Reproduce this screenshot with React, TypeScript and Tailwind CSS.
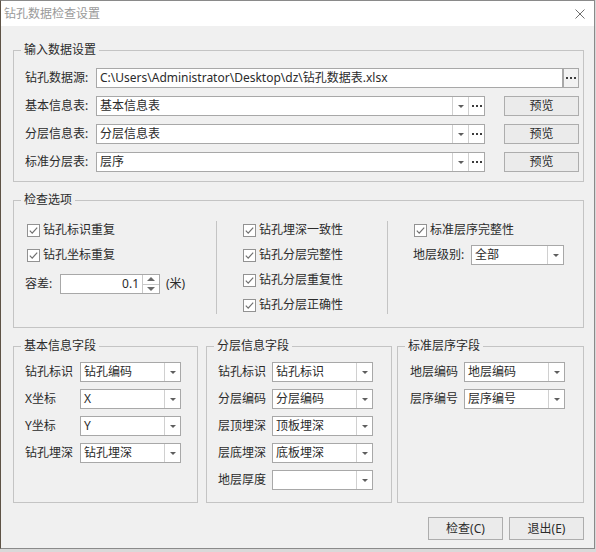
import React from "react";

const Arrow = () => (
  <span className="w-0 h-0 border-l-[3px] border-r-[3px] border-t-[3px] border-l-transparent border-r-transparent border-t-[#5e5e5e]" />
);

const Dots = () => (
  <span className="flex items-center gap-[2px]">
    <span className="w-[2px] h-[2px] bg-[#3c3c3c]" />
    <span className="w-[2px] h-[2px] bg-[#3c3c3c]" />
    <span className="w-[2px] h-[2px] bg-[#3c3c3c]" />
  </span>
);

const Group = ({
  title,
  className = "",
  children,
}: {
  title: string;
  className?: string;
  children: React.ReactNode;
}) => (
  <fieldset className={`border border-[#c4c4c4] min-w-0 ${className}`}>
    <legend className="ml-[7px] px-[3px] leading-[16px]">{title}</legend>
    {children}
  </fieldset>
);

const CheckBox = ({ label }: { label: string }) => (
  <div className="flex h-[18px] items-center gap-[3px]">
    <svg width="13" height="13" viewBox="0 0 13 13">
      <rect x="0.5" y="0.5" width="12" height="12" fill="#fff" stroke="#929292" />
      <path d="M2.8 6.6 L5.2 9.1 L10.2 3.6" fill="none" stroke="#707070" strokeWidth="1.2" />
    </svg>
    <span className="leading-[16px]">{label}</span>
  </div>
);

const Combo = ({ text, w }: { text: string; w: string }) => (
  <div className={`flex h-[20px] ${w} border border-[#a8a8a8] bg-white`}>
    <div className="flex-1 min-w-0 pl-[3px] leading-[18px] whitespace-nowrap overflow-hidden">{text}</div>
    <div className="w-[16px] border-l border-[#d0d0d0] flex items-center justify-center">
      <Arrow />
    </div>
  </div>
);

const SourceRow = ({ label, text }: { label: string; text: string }) => (
  <div className="flex h-[20px] items-center">
    <span className="w-[71px]">{label}</span>
    <div className="flex h-[20px] w-[389px] border border-[#a8a8a8] bg-white">
      <div className="flex-1 pl-[3px] leading-[18px]">{text}</div>
      <div className="w-[16px] border-l border-[#d0d0d0] flex items-center justify-center">
        <Arrow />
      </div>
      <div className="w-[16px] border-l border-[#d0d0d0] flex items-center justify-center">
        <Dots />
      </div>
    </div>
    <button className="ml-auto w-[75px] h-[20px] border border-[#adadad] bg-[#ebebeb] leading-[18px]">
      预览
    </button>
  </div>
);

const FieldRow = ({ label, text, lw }: { label: string; text: string; lw: string }) => (
  <div className="flex h-[20px] items-center">
    <span className={lw}>{label}</span>
    <Combo text={text} w="w-[101px]" />
  </div>
);

export default function App() {
  return (
    <div className="w-[596px] h-[552px] bg-[#d9d9d9] overflow-hidden font-['Noto_Sans','Noto_Sans_CJK_SC',sans-serif] text-[12px] text-[#2b2b2b]">
      <div className="w-[595px] h-[549px] border border-[#8a8a8a] border-l-[#5e5346] bg-[#f0f0f0] flex flex-col">
        {/* title bar */}
        <div className="h-[25px] bg-white flex items-center pl-[3px] pr-[9px]">
          <span className="text-[#9a9a9a] leading-[16px]">钻孔数据检查设置</span>
          <svg className="ml-auto" width="10" height="10" viewBox="0 0 10 10">
            <path d="M0.5 0.5 L9.5 9.5 M9.5 0.5 L0.5 9.5" stroke="#6e6e6e" strokeWidth="1" />
          </svg>
        </div>

        <div className="flex-1 pl-[12px] pr-[10px] pt-[16px] flex flex-col">
          {/* input data */}
          <Group title="输入数据设置">
            <div className="pl-[11px] pr-[4px] pt-[10px] pb-[9px] flex flex-col gap-[8px]">
              <div className="flex h-[20px] items-center">
                <span className="w-[71px]">钻孔数据源:</span>
                <div className="flex-1 h-[20px] border border-[#a8a8a8] bg-white pl-[3px] leading-[18px] whitespace-nowrap overflow-hidden">
                  C:\Users\Administrator\Desktop\dz\钻孔数据表.xlsx
                </div>
                <div className="w-[16px] h-[20px] border border-[#a8a8a8] bg-[#f2f2f2] flex items-center justify-center">
                  <Dots />
                </div>
              </div>
              <SourceRow label="基本信息表:" text="基本信息表" />
              <SourceRow label="分层信息表:" text="分层信息表" />
              <SourceRow label="标准分层表:" text="层序" />
            </div>
          </Group>

          {/* check options */}
          <Group title="检查选项" className="mt-[10px]">
            <div className="pl-[11px] pt-[13px] pb-[13px] flex">
              <div className="w-[191px] flex flex-col">
                <div className="pl-[2px] flex flex-col gap-[7px]">
                  <CheckBox label="钻孔标识重复" />
                  <CheckBox label="钻孔坐标重复" />
                </div>
                <div className="mt-[10px] flex h-[20px] items-center">
                  <span className="w-[35px]">容差:</span>
                  <div className="flex w-[100px] h-[20px] border border-[#a8a8a8] bg-white">
                    <div className="flex-1 text-right pr-[3px] leading-[18px]">0.1</div>
                    <div className="w-[17px] border-l border-[#c8c8c8] flex flex-col">
                      <div className="flex-1 flex items-center justify-center border-b border-[#c8c8c8]">
                        <span className="w-0 h-0 border-l-[4px] border-r-[4px] border-b-[4px] border-l-transparent border-r-transparent border-b-[#6a6a6a]" />
                      </div>
                      <div className="flex-1 flex items-center justify-center">
                        <span className="w-0 h-0 border-l-[4px] border-r-[4px] border-t-[4px] border-l-transparent border-r-transparent border-t-[#6a6a6a]" />
                      </div>
                    </div>
                  </div>
                  <span className="ml-[6px]">(米)</span>
                </div>
              </div>
              <div className="w-[171px] border-l border-[#c4c4c4] pl-[26px] flex flex-col gap-[7px]">
                <CheckBox label="钻孔埋深一致性" />
                <CheckBox label="钻孔分层完整性" />
                <CheckBox label="钻孔分层重复性" />
                <CheckBox label="钻孔分层正确性" />
              </div>
              <div className="flex-1 border-l border-[#c4c4c4] pl-[26px] flex flex-col">
                <CheckBox label="标准层序完整性" />
                <div className="mt-[6px] flex h-[20px] items-center ml-[-1px]">
                  <span className="w-[58px]">地层级别:</span>
                  <Combo text="全部" w="w-[93px]" />
                </div>
              </div>
            </div>
          </Group>

          {/* field mapping */}
          <div className="mt-[10px] flex">
            <Group title="基本信息字段" className="w-[185px]">
              <div className="pl-[11px] pt-[8px] pb-[12px] flex flex-col gap-[7px]">
                <FieldRow label="钻孔标识" text="钻孔编码" lw="w-[55px]" />
                <FieldRow label="X坐标" text="X" lw="w-[55px]" />
                <FieldRow label="Y坐标" text="Y" lw="w-[55px]" />
                <FieldRow label="钻孔埋深" text="钻孔埋深" lw="w-[55px]" />
              </div>
            </Group>
            <Group title="分层信息字段" className="ml-[8px] w-[186px]">
              <div className="pl-[11px] pt-[8px] pb-[12px] flex flex-col gap-[7px]">
                <FieldRow label="钻孔标识" text="钻孔标识" lw="w-[54px]" />
                <FieldRow label="分层编码" text="分层编码" lw="w-[54px]" />
                <FieldRow label="层顶埋深" text="顶板埋深" lw="w-[54px]" />
                <FieldRow label="层底埋深" text="底板埋深" lw="w-[54px]" />
                <FieldRow label="地层厚度" text="" lw="w-[54px]" />
              </div>
            </Group>
            <Group title="标准层序字段" className="ml-[5px] flex-1">
              <div className="pl-[12px] pt-[8px] pb-[12px] flex flex-col gap-[7px]">
                <FieldRow label="地层编码" text="地层编码" lw="w-[54px]" />
                <FieldRow label="层序编号" text="层序编号" lw="w-[54px]" />
              </div>
            </Group>
          </div>

          {/* buttons */}
          <div className="mt-[14px] flex justify-end gap-[6px]">
            <button className="w-[75px] h-[23px] border border-[#adadad] bg-[#ebebeb] leading-[21px]">检查(C)</button>
            <button className="w-[75px] h-[23px] border border-[#adadad] bg-[#ebebeb] leading-[21px]">退出(E)</button>
          </div>
        </div>
      </div>
    </div>
  );
}
